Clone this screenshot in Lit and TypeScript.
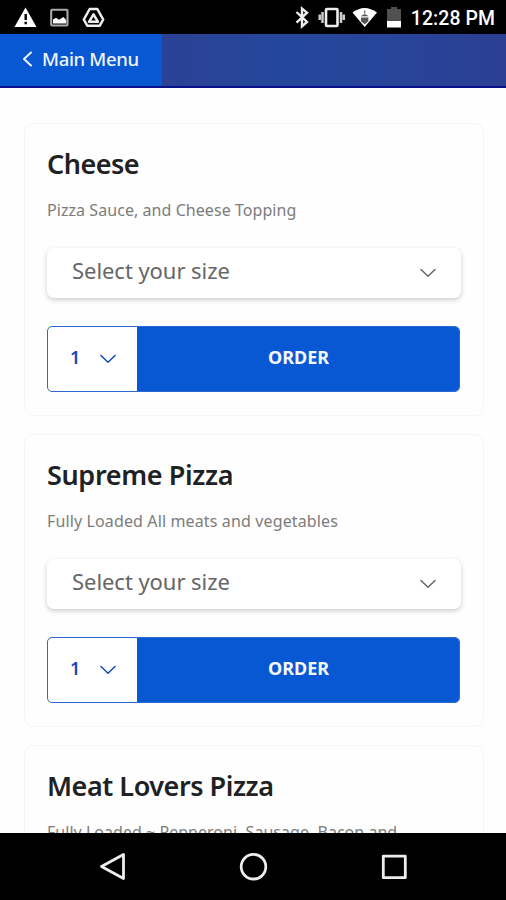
import { LitElement, html, css } from "lit";
import { customElement, property } from "lit/decorators.js";
import { styleMap } from "lit/directives/style-map.js";

const chevron = html`<svg width="16" height="10" viewBox="0 0 16 10" fill="none" stroke="currentColor" stroke-width="1.5" stroke-linecap="round" stroke-linejoin="round"><path d="M1 1.500 L8 8.300 L15 1.500"/></svg>`;

interface Pizza {
  name: string;
  description: string;
  nameSpacing: number;
  descriptionSpacing: number;
}

const PIZZAS: Pizza[] = [
  { name: "Cheese", description: "Pizza Sauce, and Cheese Topping", nameSpacing: -0.5, descriptionSpacing: 0.06 },
  { name: "Supreme Pizza", description: "Fully Loaded All meats and vegetables", nameSpacing: -0.36, descriptionSpacing: 0.13 },
  { name: "Meat Lovers Pizza", description: "Fully Loaded ~ Pepperoni, Sausage, Bacon and", nameSpacing: -0.46, descriptionSpacing: 0.03 },
];

@customElement("status-bar")
class StatusBar extends LitElement {
  static styles = css`
    :host { display: flex; height: 34px; flex: none; background: #000; color: #fff; align-items: center; box-sizing: border-box; padding: 0 11px 0 0; font: 500 19.4px/34px Roboto, sans-serif; }
    svg { display: block; flex: none; }
    .right { margin-left: auto; display: flex; align-items: center; }
    .time { margin-left: 9px; padding-top: 3px; white-space: nowrap; letter-spacing: 0.1px; }
  `;
  render() {
    return html`
      <svg width="120" height="34" viewBox="0 0 120 34">
        <path d="M25.500 7.500 L36.500 27 H14.500 Z" fill="#fff"/>
        <path d="M24.500 14h2.400v6h-2.400zM24.500 21.700h2.400v2.500h-2.400z" fill="#000"/>
        <rect x="51.200" y="9.700" width="16.300" height="15.800" rx="1" fill="none" stroke="#aaa" stroke-width="2.100"/>
        <path d="M53 23.500v-4l3-1.800 3 2 4.500-2.700 2.700 3v3.500z" fill="#fff"/>
        <path d="M89.700 9 h7.600 l5.900 10.500 -3.400 6.200 h-12.600 l-3.400-6.200z" fill="none" stroke="#eee" stroke-width="2.500" stroke-linejoin="round"/>
        <path d="M93.500 14.400 l4.500 7.400h-9z" fill="none" stroke="#eee" stroke-width="2.500" stroke-linejoin="round"/>
      </svg>
      <div class="right">
        <svg width="112" height="34" viewBox="290 0 112 34">
          <path d="M296.500 12 L307 22 L302 26.300 V8.500 L307 12.700 L296.500 22.700" fill="none" stroke="#eee" stroke-width="2.400"/>
          <rect x="326" y="9" width="11.500" height="17" rx="1" fill="none" stroke="#eee" stroke-width="2.600"/>
          <path d="M322.500 12v11M341 12v11M319.700 14.500v5.500M343.800 14.500v5.500" stroke="#ccc" stroke-width="2.500"/>
          <path d="M352.500 12.500 Q364.500 3.500 377 12.500 L364.700 27 Z" fill="#fff"/>
          <path d="M364.700 10.500v3" stroke="#777" stroke-width="1.500"/>
          <path d="M361 16.200 q3.700-4 7.400 0z M361 17.500h7.400v3.800l-3.700 3-3.700-3z" fill="#555"/>
          <path d="M387 9h4V7h6v2h4v12h-14z" fill="#505050"/>
          <path d="M387 21h14v6.500h-14z" fill="#fff"/>
        </svg>
        <span class="time">12:28 PM</span>
      </div>`;
  }
}

@customElement("pizza-card")
class PizzaCard extends LitElement {
  @property({ attribute: false }) pizza!: Pizza;
  static styles = css`
    :host { display: block; box-sizing: border-box; width: 460px; height: 293px; flex: none; padding: 22px 22px 0; border: 1px solid #f5f5f5; border-radius: 9px; background: #fefefe; }
    h2 { margin: 0; height: 36px; font-size: 27px; line-height: 36px; font-weight: 600; color: #202123; white-space: nowrap; }
    p { margin: 16px 0 0; height: 24px; font-size: 16px; line-height: 24px; color: #7c7c7c; white-space: nowrap; }
    svg { display: block; }
    .size { display: flex; align-items: center; justify-content: space-between; box-sizing: border-box; height: 50px; margin-top: 26px; padding: 0 25px; border-radius: 7px; background: #fff; box-shadow: 0 2px 5px rgba(0,0,0,.2); color: #666; }
    .size span { font-size: 22px; line-height: 30px; padding-bottom: 7px; letter-spacing: -0.05px; }
    .buy { display: flex; height: 66px; margin-top: 28px; margin-right: 1px; box-sizing: border-box; border: 1px solid #2e66d2; border-radius: 5px; overflow: hidden; background: #fff; }
    .qty { width: 89px; flex: none; display: flex; align-items: center; box-sizing: border-box; padding: 0 21px 0 22px; justify-content: space-between; color: #1747bd; font-size: 18px; font-weight: 600; }
    .qty span { margin-top: -4px; }
    .order { flex: 1; display: flex; align-items: center; justify-content: center; padding: 0 0 4px 1px; background: #0858d3; color: #f5f8ff; font-size: 18px; font-weight: 700; }
  `;
  render() {
    const p = this.pizza;
    return html`
      <h2><span style=${styleMap({ letterSpacing: `${p.nameSpacing}px` })}>${p.name}</span></h2>
      <p><span style=${styleMap({ letterSpacing: `${p.descriptionSpacing}px` })}>${p.description}</span></p>
      <div class="size"><span>Select your size</span>${chevron}</div>
      <div class="buy"><div class="qty"><span>1</span>${chevron}</div><div class="order"><span>ORDER</span></div></div>`;
  }
}

@customElement("app-root")
class AppRoot extends LitElement {
  static styles = css`
    :host { display: flex; flex-direction: column; width: 506px; height: 900px; overflow: hidden; background: #fefefe; font-family: "Noto Sans", sans-serif; }
    svg { display: block; }
    header { height: 54px; flex: none; box-sizing: border-box; display: flex; background: linear-gradient(90deg, #2b4195 32%, #24479b 55%, #27459a 75%, #2b3f93); border-bottom: 2px solid #08108a; }
    .back { width: 162px; box-sizing: border-box; padding: 0 0 3px 22px; display: flex; align-items: center; gap: 9px; background: #0858d3; color: #f0f5ff; font-size: 18.5px; letter-spacing: -0.32px; font-weight: 500; white-space: nowrap; }
    main { flex: 1; min-height: 0; overflow: hidden; display: flex; flex-direction: column; gap: 18px; padding: 35px 0 0 24px; }
    nav { height: 67px; flex: none; background: #000; display: flex; align-items: center; justify-content: center; }
  `;
  render() {
    return html`
      <status-bar></status-bar>
      <header><div class="back">
        <svg width="11" height="16" viewBox="0 0 11 16" fill="none" stroke="currentColor" stroke-width="2" stroke-linecap="round" stroke-linejoin="round"><path d="M9 1.500 L2 8 L9 14.500"/></svg>
        <span>Main Menu</span></div></header>
      <main>${PIZZAS.map((p) => html`<pizza-card .pizza=${p}></pizza-card>`)}</main>
      <nav><svg width="506" height="67" viewBox="0 833 506 67" fill="none" stroke="#ededed" stroke-width="2.800" stroke-linejoin="round">
        <path d="M101.500 866.500 L123.500 854.500 V878.500 Z"/>
        <circle cx="253.500" cy="866.700" r="12.300"/>
        <rect x="383.300" y="856.200" width="22" height="21.500"/>
      </svg></nav>`;
  }
}
